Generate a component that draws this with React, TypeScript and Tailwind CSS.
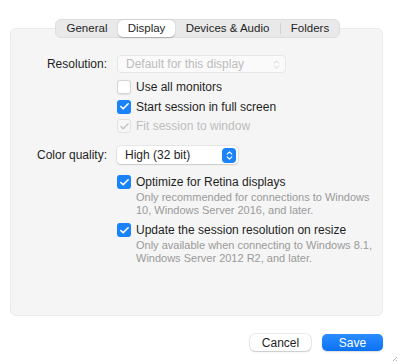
import { Check, ChevronsUpDown } from 'lucide-react'

const tabs = ['General', 'Display', 'Devices & Audio', 'Folders']

const CheckBox = ({ checked = false, disabled = false }: { checked?: boolean; disabled?: boolean }) => {
  if (disabled) {
    return (
      <div className="w-[14px] h-[14px] rounded-[3px] border border-[#e2e2e2] bg-[#f7f7f7] flex items-center justify-center">
        <Check className="w-[11px] h-[11px] text-[#c4c4c4]" strokeWidth={3} />
      </div>
    )
  }
  if (checked) {
    return (
      <div className="w-[14px] h-[14px] rounded-[3px] bg-[#1a82fb] flex items-center justify-center">
        <Check className="w-[11px] h-[11px] text-white" strokeWidth={3.5} />
      </div>
    )
  }
  return <div className="w-[14px] h-[14px] rounded-[3px] border border-[#d4d4d4] bg-white shadow-[0_0.5px_1px_rgba(0,0,0,0.08)]" />
}

const CheckRow = ({
  label,
  checked,
  disabled,
  className = 'h-[20px]'
}: {
  label: string
  checked?: boolean
  disabled?: boolean
  className?: string
}) => (
  <div className={`flex items-center gap-[5px] ${className}`}>
    <CheckBox checked={checked} disabled={disabled} />
    <span className={disabled ? 'text-[#bdbdbd]' : 'text-[#1f1f1f]'}>{label}</span>
  </div>
)

const Label = ({ children }: { children: string }) => (
  <div className="w-[106px] pr-[10px] text-right text-[#1f1f1f] shrink-0">{children}</div>
)

const Hint = ({ lines }: { lines: string[] }) => (
  <div className="pl-[19px] text-[11px] leading-[13px] text-[#9a9a9a] whitespace-nowrap">
    {lines.map(line => (
      <div key={line}>{line}</div>
    ))}
  </div>
)

export default function App() {
  return (
    <div
      className="w-[400px] h-[364px] bg-white relative overflow-hidden text-[12px]"
      style={{ fontFamily: '"Liberation Sans", Arial, sans-serif' }}
    >
      {/* Tabs */}
      <div className="pt-[19px] flex">
        <div className="relative z-10 ml-[55px] flex items-center h-[19px] w-[285px] rounded-[6px] bg-[#e9e9e9] border border-[#dedede] text-[#1f1f1f] text-[11.5px]">
          <div className="w-[62px] text-center">{tabs[0]}</div>
          <div className="w-[57px] h-[17px] bg-white rounded-[5px] shadow-[0_0.5px_1.5px_rgba(0,0,0,0.25)] flex items-center justify-center">
            {tabs[1]}
          </div>
          <div className="w-[105px] text-center">{tabs[2]}</div>
          <div className="w-px h-[11px] bg-[#d2d2d2]" />
          <div className="flex-1 text-center">{tabs[3]}</div>
        </div>
      </div>

      {/* Panel */}
      <div className="-mt-[10px] ml-[10px] w-[373px] h-[288px] rounded-[6px] bg-[#f5f5f5] border border-[#ebebeb] pt-[26px]">
        <div className="flex items-center h-[18px]">
          <Label>Resolution:</Label>
          <div className="w-[169px] h-[18px] rounded-[4px] border border-[#e6e6e6] bg-[#fafafa] flex items-center pl-[8px] pr-[3px] text-[#bcbcbc]">
            <span className="flex-1">Default for this display</span>
            <ChevronsUpDown className="w-[11px] h-[11px] text-[#c2c2c2]" strokeWidth={1.5} />
          </div>
        </div>

        <div className="ml-[106px] mt-[4px]">
          <CheckRow label="Use all monitors" />
          <CheckRow label="Start session in full screen" checked className="h-[19px]" />
          <CheckRow label="Fit session to window" disabled />
        </div>

        <div className="flex items-center h-[18px] mt-[10px]">
          <Label>Color quality:</Label>
          <div className="w-[121px] h-[18px] rounded-[4px] bg-white shadow-[0_0_0_0.5px_rgba(0,0,0,0.12),0_1px_1.5px_rgba(0,0,0,0.12)] flex items-center pl-[8px] pr-[2px] text-[#1f1f1f]">
            <span className="flex-1">High (32 bit)</span>
            <div className="w-[14px] h-[15px] rounded-[4px] bg-[#1a82fb] flex items-center justify-center">
              <ChevronsUpDown className="w-[11px] h-[11px] text-white" strokeWidth={2.5} />
            </div>
          </div>
        </div>

        <div className="ml-[106px] mt-[9px]">
          <CheckRow label="Optimize for Retina displays" checked className="h-[18px]" />
          <Hint lines={['Only recommended for connections to Windows', '10, Windows Server 2016, and later.']} />
          <CheckRow label="Update the session resolution on resize" checked className="h-[18px] mt-[4px]" />
          <Hint lines={['Only available when connecting to Windows 8.1,', 'Windows Server 2012 R2, and later.']} />
        </div>
      </div>

      {/* Buttons */}
      <div className="flex justify-end gap-[11px] mt-[18px] mr-[17px]">
        <button className="w-[61px] h-[17px] rounded-[5px] bg-white text-[#1f1f1f] shadow-[0_0_0_0.5px_rgba(0,0,0,0.15),0_1px_1.5px_rgba(0,0,0,0.15)] flex items-center justify-center">
          Cancel
        </button>
        <button className="w-[61px] h-[17px] rounded-[5px] bg-gradient-to-b from-[#2a8cff] to-[#0a72f5] text-white shadow-[0_1px_1.5px_rgba(0,0,0,0.15)] flex items-center justify-center">
          Save
        </button>
      </div>

      {/* Resize grip */}
      <svg className="absolute right-[2px] bottom-[2px]" width="8" height="8" viewBox="0 0 8 8">
        <path d="M7 3 L3 7 M7 6 L6 7" stroke="#b5b5b5" strokeWidth="1" />
      </svg>
    </div>
  )
}
